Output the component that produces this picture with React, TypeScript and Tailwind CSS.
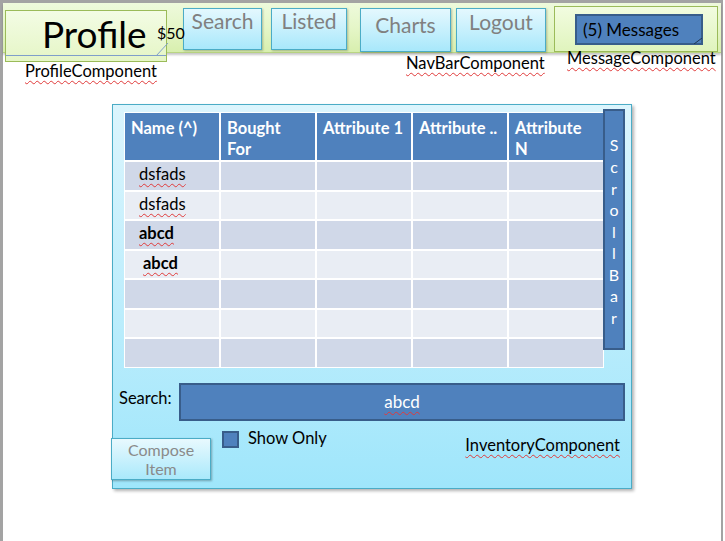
import React from "react";

const squiggle =
  "underline decoration-wavy decoration-[#e03a3a] decoration-1 underline-offset-[3px]";

const NavBtn = ({ label, w, h, ml, mt, pt }: { label: string; w: number; h: number; ml: number; mt: number; pt: number }) => (
  <div
    className="shrink-0 border border-[#4bacc6] bg-gradient-to-b from-[#e4f8fe] to-[#a8e8fb] text-center text-[21px] leading-[22px] text-[#808080] shadow-[1px_1px_2px_rgba(0,0,0,0.25)]"
    style={{ width: w, height: h, marginLeft: ml, marginTop: mt, paddingTop: pt }}
  >
    {label}
  </div>
);

const rows = [
  { name: "dsfads", bold: false, pl: 14 },
  { name: "dsfads", bold: false, pl: 14 },
  { name: "abcd", bold: true, pl: 14 },
  { name: "abcd", bold: true, pl: 18 },
  { name: "", bold: false, pl: 14 },
  { name: "", bold: false, pl: 14 },
  { name: "", bold: false, pl: 14 },
];

const headers = ["Name (^)", "Bought For", "Attribute 1", "Attribute ..", "Attribute N"];

export default function App() {
  return (
    <div className="w-[725px] h-[541px] bg-white [font-family:Lato,'Liberation_Sans',sans-serif] text-black overflow-hidden">
      <div className="w-[723px] h-[541px] border-l-[3px] border-t-[3px] border-r-[2px] border-[#a3a3a3] flex flex-col">
        {/* Nav bar */}
        <div className="relative z-10 h-[50px] shrink-0 flex items-start bg-gradient-to-b from-[#eefadc] via-[#e5f6c8] to-[#d8efae] border-b border-[#b9d583] shadow-[0_2px_2px_rgba(0,0,0,0.22)]">
          {/* Profile box */}
          <div className="relative shrink-0 ml-[2px] mt-[7px] w-[162px] h-[52px] border border-[#9bbb59] bg-gradient-to-b from-[#f3fce4] to-[#e5f6c6] pl-[36px] text-[37px] leading-[46px]">
            Profile
            <div className="absolute left-0 right-0 top-[44px] h-px bg-[#7f9fca]" />
            <svg className="absolute left-[149px] top-[31px]" width="14" height="15" viewBox="0 0 14 15">
              <line x1="1" y1="14" x2="13" y2="1" stroke="#7f9fca" strokeWidth="1" />
            </svg>
            <span className="absolute left-[151px] top-[12px] text-[16px] leading-[20px]">$50</span>
          </div>
          <NavBtn label="Search" w={79} h={42} ml={16} mt={5} pt={1} />
          <NavBtn label="Listed" w={76} h={42} ml={9} mt={5} pt={1} />
          <NavBtn label="Charts" w={91} h={44} ml={13} mt={5} pt={5} />
          <NavBtn label="Logout" w={90} h={44} ml={5} mt={5} pt={2} />
          {/* Message component */}
          <div className="shrink-0 ml-[8px] mt-[3px] w-[164px] h-[46px] border border-[#9bbb59] bg-gradient-to-b from-[#f2fce0] to-[#e0f4bd] pl-[20px] pt-[7px]">
            <div className="relative w-[128px] h-[31px] border-2 border-[#385d8a] bg-[#4f81bd] pl-[6px] text-[17px] leading-[27px] whitespace-nowrap">
              (5) Messages
              <svg className="absolute right-[-1px] bottom-[-1px]" width="8" height="6" viewBox="0 0 8 6">
                <line x1="0" y1="6" x2="8" y2="0" stroke="#1f3550" strokeWidth="1" />
              </svg>
            </div>
          </div>
        </div>

        {/* Annotation labels */}
        <div className="h-[51px] shrink-0 flex items-start text-[16.5px] leading-[18px] whitespace-nowrap">
          <div className="w-[403px] pl-[22px] mt-[9px]">
            <span className={squiggle}>ProfileComponent</span>
          </div>
          <div className="w-[161px] mt-[1px]">
            <span className={squiggle}>NavBarComponent</span>
          </div>
          <div className="relative z-20 mt-[-4px]">
            <span className={squiggle}>MessageComponent</span>
          </div>
        </div>

        {/* Inventory component */}
        <div className="ml-[109px] w-[520px] h-[385px] border border-[#4bacc6] bg-gradient-to-b from-[#dcf5fd] to-[#9fe6fb] shadow-[2px_2px_3px_rgba(0,0,0,0.3)] flex flex-col">
          <div className="flex items-start pl-[11px] pt-[7px]">
            <div className="w-[480px] bg-white p-[1px] grid grid-cols-[94px_94px_94px_94px_94px] gap-[2px]">
              {headers.map((h) => (
                <div
                  key={h}
                  className="h-[47px] bg-[#4f81bd] pl-[6px] pt-[5px] text-[16.5px] leading-[21px] font-bold text-white whitespace-nowrap"
                >
                  {h === "Bought For" ? (
                    <>
                      Bought
                      <br />
                      For
                    </>
                  ) : h === "Attribute N" ? (
                    <>
                      Attribute
                      <br />N
                    </>
                  ) : (
                    h
                  )}
                </div>
              ))}
              {rows.map((r, i) =>
                [0, 1, 2, 3, 4].map((c) => (
                  <div
                    key={i + "-" + c}
                    className={
                      "h-[27.5px] text-[16.5px] leading-[24px] " +
                      (i % 2 === 0 ? "bg-[#d0d8e8]" : "bg-[#e9edf4]") +
                      (r.bold ? " font-bold" : "")
                    }
                    style={{ paddingLeft: c === 0 ? r.pl : 0 }}
                  >
                    {c === 0 && r.name ? <span className={squiggle}>{r.name}</span> : null}
                  </div>
                ))
              )}
            </div>
            <div className="ml-[-1px] mt-[-3px] w-[22px] h-[241px] border-2 border-[#385d8a] bg-[#4f81bd] flex flex-col items-center justify-center pt-[4px] text-[16px] leading-[21.6px] text-white">
              {"ScrollBar".split("").map((ch, i) => (
                <span key={i}>{ch}</span>
              ))}
            </div>
          </div>

          {/* Search row */}
          <div className="flex items-center mt-[15px]">
            <span className="ml-[6px] w-[60px] text-[16.5px] leading-[18px] pb-[7px] whitespace-nowrap">Search:</span>
            <div className="w-[446px] h-[38px] border-2 border-[#385d8a] bg-[#4f81bd] flex items-center justify-center text-[17px] text-white">
              <span className={squiggle}>abcd</span>
            </div>
          </div>

          {/* Bottom row */}
          <div className="flex items-start">
            <div className="ml-[-2px] mt-[17px] w-[100px] h-[42px] border border-[#4bacc6] bg-gradient-to-b from-[#e8f9fe] to-[#a9e9fb] shadow-[1px_1px_2px_rgba(0,0,0,0.3)] text-center text-[16px] leading-[19px] text-[#8a8a8a] pt-[1px]">
              Compose
              <br />
              Item
            </div>
            <div className="ml-[11px] mt-[8px] flex items-center">
              <div className="w-[17px] h-[17px] border-2 border-[#385d8a] bg-[#4f81bd]" />
              <span className="ml-[9px] text-[16.5px] leading-[18px] pb-[3px]">Show Only</span>
            </div>
            <div className="ml-auto mr-[11px] mt-[15px] text-[16.5px] leading-[18px] whitespace-nowrap">
              <span className={squiggle}>InventoryComponent</span>
            </div>
          </div>
        </div>
      </div>
    </div>
  );
}
